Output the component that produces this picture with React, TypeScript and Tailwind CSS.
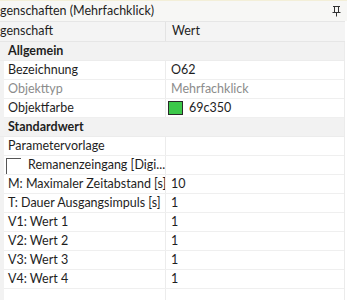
import React from 'react';

type Row =
  | { kind: 'cat'; label: string }
  | { kind: 'prop'; label: string; value?: string; muted?: boolean; color?: string; check?: boolean };

const rows: Row[] = [
  { kind: 'cat', label: 'Allgemein' },
  { kind: 'prop', label: 'Bezeichnung', value: 'O62' },
  { kind: 'prop', label: 'Objekttyp', value: 'Mehrfachklick', muted: true },
  { kind: 'prop', label: 'Objektfarbe', value: '69c350', color: '#3cc84a' },
  { kind: 'cat', label: 'Standardwert' },
  { kind: 'prop', label: 'Parametervorlage' },
  { kind: 'prop', label: 'Remanenzeingang [Digi...', check: true },
  { kind: 'prop', label: 'M: Maximaler Zeitabstand [s]', value: '10' },
  { kind: 'prop', label: 'T: Dauer Ausgangsimpuls [s]', value: '1' },
  { kind: 'prop', label: 'V1: Wert 1', value: '1' },
  { kind: 'prop', label: 'V2: Wert 2', value: '1' },
  { kind: 'prop', label: 'V3: Wert 3', value: '1' },
  { kind: 'prop', label: 'V4: Wert 4', value: '1' },
];

function PinIcon() {
  return (
    <svg width="9" height="11" viewBox="0 0 9 11" className="text-[#333]">
      <path d="M1 0.5h7M2.5 0.5v5.5M6.5 0.5v5.5M0.5 6.5h8M4.5 6.5v4" stroke="currentColor" strokeWidth="1" fill="none" />
    </svg>
  );
}

export default function App() {
  return (
    <div
      className="w-[347px] h-[300px] overflow-hidden bg-white text-[12.5px] text-[#1e1e1e] flex flex-col"
      style={{ fontFamily: 'Lato, "Noto Sans", sans-serif' }}
    >
      {/* Title bar */}
      <div className="h-[21px] shrink-0 flex items-center justify-between bg-[#f7f7f5] border-t border-[#f3efd8] pr-[6px]">
        <span className="leading-none whitespace-nowrap">genschaften (Mehrfachklick)</span>
        <PinIcon />
      </div>

      {/* Column header */}
      <div className="h-[21px] shrink-0 flex bg-[#f4f4f4] border-y border-[#e6e6e6] mr-[2px]">
        <div className="w-[166px] shrink-0 flex items-center border-r border-[#e3e3e3]">
          <span className="whitespace-nowrap">genschaft</span>
        </div>
        <div className="flex-1 flex items-center pl-[6px]">Wert</div>
      </div>

      {/* Rows */}
      <div className="flex-1 flex flex-col mr-[2px] border-r border-[#ebebeb]">
        {rows.map((row, i) =>
          row.kind === 'cat' ? (
            <div key={i} className="h-[19px] shrink-0 flex items-center bg-[#f2f2f2] border-b border-[#ececec] pl-[8px] font-bold">
              {row.label}
            </div>
          ) : (
            <div key={i} className="h-[19px] shrink-0 flex bg-[#f2f2f2] pl-[4px]">
              <div className="flex-1 flex bg-white border-b border-[#efefef]">
                <div className="w-[162px] shrink-0 flex items-center border-r border-[#ececec] pl-[4px] whitespace-nowrap overflow-hidden">
                  {row.check && (
                    <span className="w-[15px] h-[16px] border-l border-t border-[#555] -ml-[2px] mr-[7px] mt-[2px] self-start shrink-0" />
                  )}
                  <span className={row.muted ? 'text-[#8c8c8c]' : ''}>{row.label}</span>
                </div>
                <div className="flex-1 flex items-center pl-[5px] whitespace-nowrap">
                  {row.color && (
                    <span
                      className="w-[15px] h-[14px] border border-[#2a2a2a] mr-[6px] -ml-[3px] shrink-0"
                      style={{ backgroundColor: row.color }}
                    />
                  )}
                  {row.value && <span className={row.muted ? 'text-[#8c8c8c]' : ''}>{row.value}</span>}
                </div>
              </div>
            </div>
          )
        )}
        <div className="flex-1 flex bg-[#f2f2f2] pl-[4px]">
          <div className="flex-1 flex bg-white">
            <div className="w-[162px] border-r border-[#ececec]" />
          </div>
        </div>
      </div>
    </div>
  );
}
